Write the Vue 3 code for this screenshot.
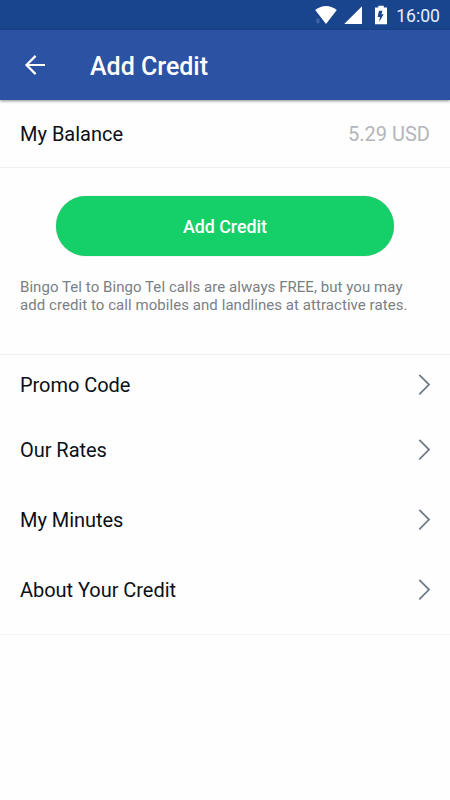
<template>
  <div class="screen">
    <div class="status-bar">
      <svg class="status-icons" width="90" height="30" viewBox="0 0 90 30">
        <rect x="2" y="18.8" width="1.8" height="4" rx="0.9" fill="none" stroke="#6f8fc6" stroke-width="0.7" />
        <path d="M0.2 9.9 Q11 1.9 21.8 9.9 L11 24 Z" fill="#fff" />
        <path d="M29.2 24 L47 6.2 V24 Z" fill="#fff" />
        <path d="M60 7.5 H63.3 V5.8 H68.8 V7.5 H72 V24.2 H60 Z" fill="#fff" />
        <path d="M64 10.8 H67.4 L66.4 14.2 H68.6 L64.2 22 L65 17 H62.6 Z" fill="#19448e" />
      </svg>
      <span class="time">16:00</span>
    </div>

    <header class="toolbar">
      <button class="back" aria-label="Back">
        <svg width="22" height="22" viewBox="0 0 22 22">
          <path d="M21 11 H2.6 M11.6 1.9 L2.5 11 L11.6 20.1" fill="none" stroke="#fff" stroke-width="2.2" />
        </svg>
      </button>
      <h1 class="title">Add Credit</h1>
    </header>

    <div class="balance">
      <span>My Balance</span>
      <span class="amount">{{ balance }}</span>
    </div>

    <div class="credit">
      <button class="add-btn">Add Credit</button>
      <p class="hint">
        Bingo Tel to Bingo Tel calls are always FREE, but you may<br />
        add credit to call mobiles and landlines at attractive rates.
      </p>
    </div>

    <div class="menu">
      <div v-for="item in items" :key="item" class="menu-item">
        <span>{{ item }}</span>
        <svg width="14" height="22" viewBox="0 0 14 22">
          <path d="M2.8 1.4 L12 10.6 L2.8 19.8" fill="none" stroke="#707b88" stroke-width="1.8" stroke-linecap="round" />
        </svg>
      </div>
    </div>
  </div>
</template>

<script setup>
import { ref } from 'vue';

const balance = ref('5.29 USD');

const items = ['Promo Code', 'Our Rates', 'My Minutes', 'About Your Credit'];
</script>

<style>
body {
  margin: 0;
  background: #fefefe;
}
</style>

<style scoped>
.screen {
  width: 100%;
  height: 800px;
  overflow: hidden;
  background: #fefefe;
  font-family: Roboto, sans-serif;
  color: #0b1017;
}

.status-bar {
  display: flex;
  justify-content: flex-end;
  align-items: center;
  height: 30px;
  padding-right: 10px;
  background: #19448e;
}

.status-icons {
  margin-right: -9px;
}

.time {
  color: #e8eef7;
  font-size: 17.6px;
  line-height: 30px;
  margin-top: 2px;
}

.toolbar {
  position: relative;
  display: flex;
  align-items: center;
  height: 70px;
  padding-left: 24px;
  background: #2c52a3;
  box-shadow: 0 1px 3px rgba(0, 0, 0, 0.45);
}

.back {
  display: flex;
  padding: 0;
  border: 0;
  background: none;
}

.title {
  margin: 2px 0 0 44px;
  color: #fff;
  font-size: 25px;
  font-weight: 500;
}

.balance {
  display: flex;
  justify-content: space-between;
  align-items: center;
  height: 67px;
  padding: 0 20px;
  border-bottom: 1px solid #f0f0f0;
  font-size: 20px;
}

.amount {
  color: #b4b5b9;
}

.credit {
  height: 158px;
  padding: 28px 20px 0;
  border-bottom: 1px solid #f0f0f0;
}

.add-btn {
  display: block;
  width: 338px;
  height: 60px;
  margin: 0 auto;
  border: 0;
  border-radius: 30px;
  background: #15cf68;
  box-shadow: 0 0 1px rgba(0, 0, 0, 0.35);
  color: #fff;
  font-family: inherit;
  font-size: 17.8px;
  font-weight: 500;
}

.hint {
  margin: 22px 0 0;
  color: #7b7f84;
  font-size: 15px;
  line-height: 18px;
  letter-spacing: 0.06px;
  white-space: nowrap;
}

.menu {
  padding-bottom: 9px;
  border-bottom: 1px solid #f4f4f4;
}

.menu-item {
  display: flex;
  justify-content: space-between;
  align-items: center;
  height: 70px;
  padding: 0 19px 0 20px;
  font-size: 20px;
  letter-spacing: -0.04px;
}

.menu-item:first-child {
  height: 60px;
}
</style>
